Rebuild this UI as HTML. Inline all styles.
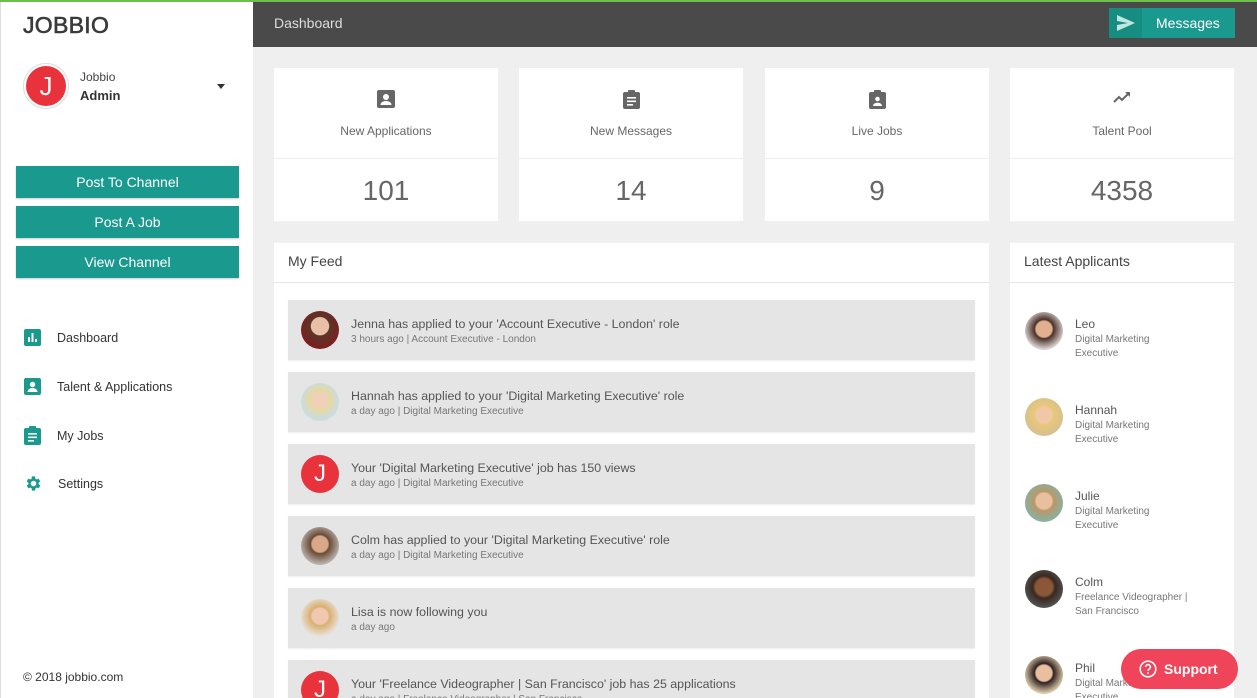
<!DOCTYPE html>
<html style="overflow:hidden;width:1257px;height:698px"><head><meta charset="utf-8"><style>
*{box-sizing:border-box;margin:0;padding:0}
body{width:1257px;height:698px;overflow:hidden;background:#efefef;font-family:"Liberation Sans",sans-serif;position:relative;color:#555}
.abs{position:absolute}
#top{left:0;top:0;width:1257px;height:2px;background:#6cc04a}
#side{left:0;top:2px;width:253px;height:696px;background:#fff;border-left:1px solid #ddd}
#hdr{left:253px;top:2px;width:1004px;height:45px;background:#4a4a4a}
.btn{position:absolute;left:16px;width:223px;height:32px;background:#1a9a8e;color:#fff;font-size:14px;text-align:center;line-height:32px;box-shadow:0 1px 2px rgba(0,0,0,.2)}
.nav{position:absolute;left:24px;font-size:12.5px;color:#333;display:flex;align-items:center}
.nav span{margin-left:16px}
.card{position:absolute;background:#fff;top:68px;width:224px;height:153px}
.card .ic{position:absolute;top:22px;left:0;width:100%;text-align:center}
.card .lb{position:absolute;top:56px;width:100%;text-align:center;font-size:12px;color:#666}
.card .ln{position:absolute;top:90px;left:0;width:100%;height:1px;background:#eee}
.card .num{position:absolute;top:107px;width:100%;text-align:center;font-size:28px;color:#666}
.item{position:absolute;left:288px;width:687px;height:60px;background:#e5e5e5;box-shadow:0 1px 1px rgba(0,0,0,.08)}
.item .av{position:absolute;left:13px;top:11px;width:38px;height:38px;border-radius:50%}
.item .t{position:absolute;left:63px;top:17px;font-size:12.4px;color:#555;white-space:nowrap}
.item .s{position:absolute;left:63px;top:34px;font-size:10px;color:#777;white-space:nowrap}
.J{background:#e8323c;color:#fff;text-align:center;font-size:24px;line-height:38px}
.ap{position:absolute;left:1025px}
.ap .av{position:absolute;left:0;top:-11px;width:38px;height:38px;border-radius:50%}
.ap .n{position:absolute;left:50px;top:-6px;font-size:12px;color:#555;white-space:nowrap}
.ap .r{position:absolute;left:50px;top:10px;font-size:10px;color:#777;line-height:14px;width:140px}
</style></head><body>
<div id="top" class="abs"></div>
<div id="side" class="abs"></div>
<div class="abs" style="left:23px;top:12px;font-size:23px;color:#3a3a3a;letter-spacing:0.3px;-webkit-text-stroke:0.6px #3a3a3a">JOBBIO</div>
<div class="abs" style="left:23px;top:63px;width:46px;height:46px;border-radius:50%;border:1px solid #ddd;padding:2px"><div class="J" style="width:40px;height:40px;border-radius:50%;line-height:40px;font-size:26px">J</div></div>
<div class="abs" style="left:80px;top:70px;font-size:12px;color:#444">Jobbio</div>
<div class="abs" style="left:80px;top:88px;font-size:13px;color:#333;font-weight:bold">Admin</div>
<div class="abs" style="left:217px;top:84px;width:0;height:0;border-left:4.5px solid transparent;border-right:4.5px solid transparent;border-top:5px solid #333"></div>
<div class="btn" style="top:166px">Post To Channel</div>
<div class="btn" style="top:206px">Post A Job</div>
<div class="btn" style="top:246px">View Channel</div>
<div class="nav" style="top:329px"><svg width="17" height="17" viewBox="0 0 17 17"><rect width="17" height="17" rx="2" fill="#1a9a8e"/><rect x="4" y="8" width="2" height="5" fill="#fff"/><rect x="7.5" y="4" width="2" height="9" fill="#fff"/><rect x="11" y="10" width="2" height="3" fill="#fff"/></svg><span>Dashboard</span></div>
<div class="nav" style="top:378px"><svg width="17" height="17" viewBox="0 0 17 17"><rect width="17" height="17" rx="2" fill="#1a9a8e"/><circle cx="8.5" cy="6.5" r="2.7" fill="#fff"/><path d="M3.5 14c0-3 3-4 5-4s5 1 5 4z" fill="#fff"/></svg><span>Talent &amp; Applications</span></div>
<div class="nav" style="top:426px"><svg width="17" height="19" viewBox="0 0 17 19"><rect y="2" width="17" height="17" rx="2" fill="#1a9a8e"/><rect x="5" y="0" width="7" height="4" rx="1" fill="#1a9a8e"/><rect x="4" y="7" width="9" height="1.6" fill="#fff"/><rect x="4" y="10.5" width="9" height="1.6" fill="#fff"/><rect x="4" y="14" width="6" height="1.6" fill="#fff"/></svg><span>My Jobs</span></div>
<div class="nav" style="top:474px"><svg width="19" height="19" viewBox="0 0 24 24"><path fill="#1a9a8e" d="M19.4 13a7.5 7.5 0 000-2l2.1-1.6-2-3.5-2.5 1a7 7 0 00-1.7-1L15 3h-4l-.4 2.9a7 7 0 00-1.7 1l-2.5-1-2 3.5L6.6 11a7.5 7.5 0 000 2l-2.1 1.6 2 3.5 2.5-1a7 7 0 001.7 1L11 21h4l.4-2.9a7 7 0 001.7-1l2.5 1 2-3.5zM13 15.5a3.5 3.5 0 110-7 3.5 3.5 0 010 7z" transform="translate(-1 0)"/></svg><span style="margin-left:15px">Settings</span></div>
<div class="abs" style="left:23px;top:670px;font-size:12px;color:#333">© 2018 jobbio.com</div>

<div id="hdr" class="abs"></div>
<div class="abs" style="left:274px;top:15px;font-size:14px;color:#ddd">Dashboard</div>
<div class="abs" style="left:1109px;top:8px;width:126px;height:30px;background:#1a9a8e"><div style="position:absolute;left:0;top:0;width:33px;height:30px;background:#178d82"></div><svg class="abs" style="left:8px;top:7px" width="18" height="16" viewBox="0 0 18 16"><path d="M0 0L18 8 0 16 0 10 11 8 0 6z" fill="#bfe6e2"/></svg><div class="abs" style="left:47px;top:7px;font-size:14px;color:#fff">Messages</div></div>

<div class="card" style="left:274px"><div class="ic"><svg width="18" height="18" viewBox="0 0 18 18"><rect width="18" height="18" rx="2" fill="#666"/><circle cx="9" cy="7" r="3" fill="#fff"/><path d="M3.5 15c0-3 3.5-4 5.5-4s5.5 1 5.5 4z" fill="#fff"/></svg></div><div class="lb">New Applications</div><div class="ln"></div><div class="num">101</div></div>
<div class="card" style="left:519px"><div class="ic"><svg width="17" height="19" viewBox="0 0 17 19"><rect y="2" width="17" height="17" rx="2" fill="#666"/><rect x="5" y="0" width="7" height="4" rx="1" fill="#666"/><rect x="4" y="7" width="9" height="1.6" fill="#fff"/><rect x="4" y="10.5" width="9" height="1.6" fill="#fff"/><rect x="4" y="14" width="6" height="1.6" fill="#fff"/></svg></div><div class="lb">New Messages</div><div class="ln"></div><div class="num">14</div></div>
<div class="card" style="left:765px"><div class="ic"><svg width="17" height="19" viewBox="0 0 17 19"><rect y="2" width="17" height="17" rx="2" fill="#666"/><rect x="5" y="0" width="7" height="4" rx="1" fill="#666"/><circle cx="8.5" cy="9" r="2.3" fill="#fff"/><path d="M4 16c0-2.5 2.5-3.3 4.5-3.3s4.5.8 4.5 3.3z" fill="#fff"/></svg></div><div class="lb">Live Jobs</div><div class="ln"></div><div class="num">9</div></div>
<div class="card" style="left:1010px"><div class="ic"><svg width="18" height="12" viewBox="0 0 18 12"><path d="M1 11l5-5 3 3 6-6" stroke="#666" stroke-width="2" fill="none"/><path d="M12 1h5v5z" fill="#666"/></svg></div><div class="lb">Talent Pool</div><div class="ln"></div><div class="num">4358</div></div>

<div class="abs" style="left:274px;top:243px;width:715px;height:455px;background:#fff;overflow:hidden">
<div class="abs" style="left:0;top:39px;width:715px;height:1px;background:#e5e5e5"></div>
<div class="abs" style="left:14px;top:10px;font-size:14px;color:#444">My Feed</div>
<div style="position:absolute;left:-274px;top:-243px;width:1257px;height:698px">
<div class="item" style="top:300px"><div class="av" style="background:radial-gradient(circle at 50% 40%,#e8c0a8 30%,#5a3528 32%,#7a2020 70%)"></div><div class="t">Jenna has applied to your 'Account Executive - London' role</div><div class="s">3 hours ago | Account Executive - London</div></div>
<div class="item" style="top:372px"><div class="av" style="background:radial-gradient(circle at 50% 45%,#f0d0b8 28%,#e8d8a0 32%,#c8dce4 70%)"></div><div class="t">Hannah has applied to your 'Digital Marketing Executive' role</div><div class="s">a day ago | Digital Marketing Executive</div></div>
<div class="item" style="top:444px"><div class="av J">J</div><div class="t">Your 'Digital Marketing Executive' job has 150 views</div><div class="s">a day ago | Digital Marketing Executive</div></div>
<div class="item" style="top:516px"><div class="av" style="background:radial-gradient(circle at 50% 45%,#d8a888 28%,#6a4a38 34%,#b8b0a8 70%)"></div><div class="t">Colm has applied to your 'Digital Marketing Executive' role</div><div class="s">a day ago | Digital Marketing Executive</div></div>
<div class="item" style="top:588px"><div class="av" style="background:radial-gradient(circle at 50% 45%,#f0c8b0 28%,#d8b070 34%,#e8e0d8 70%)"></div><div class="t">Lisa is now following you</div><div class="s">a day ago</div></div>
<div class="item" style="top:660px"><div class="av J">J</div><div class="t">Your 'Freelance Videographer | San Francisco' job has 25 applications</div><div class="s">a day ago | Freelance Videographer | San Francisco</div></div>
</div></div>

<div class="abs" style="left:1010px;top:243px;width:224px;height:455px;background:#fff"></div>
<div class="abs" style="left:1010px;top:282px;width:224px;height:1px;background:#e5e5e5"></div>
<div class="abs" style="left:1024px;top:253px;font-size:14px;color:#444">Latest Applicants</div>
<div class="ap" style="top:323px"><div class="av" style="background:radial-gradient(circle at 50% 45%,#e0b090 28%,#4a3028 34%,#d8d0d0 70%)"></div><div class="n">Leo</div><div class="r">Digital Marketing<br>Executive</div></div>
<div class="ap" style="top:409px"><div class="av" style="background:radial-gradient(circle at 50% 45%,#f0c8a8 28%,#e8c878 34%,#d8c090 70%)"></div><div class="n">Hannah</div><div class="r">Digital Marketing<br>Executive</div></div>
<div class="ap" style="top:495px"><div class="av" style="background:radial-gradient(circle at 50% 45%,#e8c0a0 28%,#b89868 34%,#8ab0a0 70%)"></div><div class="n">Julie</div><div class="r">Digital Marketing<br>Executive</div></div>
<div class="ap" style="top:581px"><div class="av" style="background:radial-gradient(circle at 50% 45%,#8a5838 30%,#3a2820 40%,#505050 70%)"></div><div class="n">Colm</div><div class="r">Freelance Videographer |<br>San Francisco</div></div>
<div class="ap" style="top:667px"><div class="av" style="background:radial-gradient(circle at 50% 45%,#e8c0a0 28%,#302020 34%,#d8c8a8 70%)"></div><div class="n">Phil</div><div class="r">Digital Marketing<br>Executive</div></div>

<div class="abs" style="left:1121px;top:649px;width:117px;height:40px;border-radius:20px;background:#f0445a;color:#fff;font-weight:bold;font-size:14px;line-height:40px"><svg class="abs" style="left:18px;top:11px" width="18" height="18" viewBox="0 0 18 18"><circle cx="9" cy="9" r="7.8" stroke="#fff" stroke-width="1.6" fill="none"/><path d="M6.6 7a2.4 2.4 0 114 1.8c-.9.6-1.6 1-1.6 2.2" stroke="#fff" stroke-width="1.6" fill="none"/><circle cx="9" cy="13.3" r="1" fill="#fff"/></svg><span style="position:absolute;left:43px">Support</span></div>
</body></html>
